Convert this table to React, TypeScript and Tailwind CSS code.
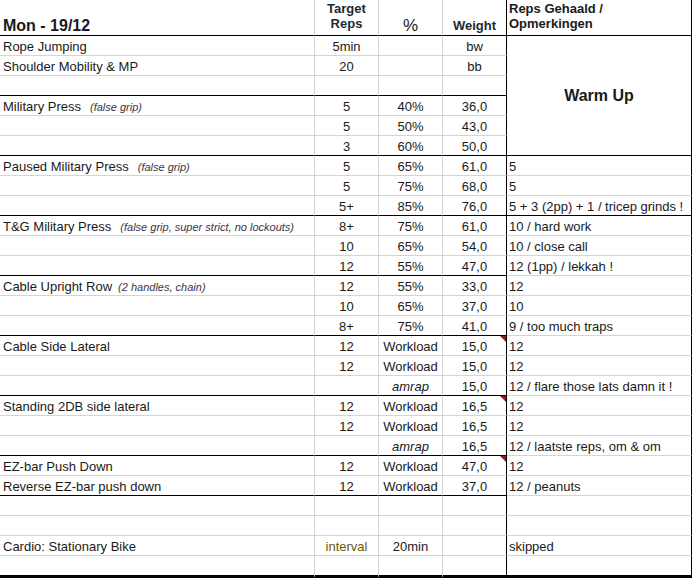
import React from 'react';

type Row = {
  a?: string;
  note?: string;
  tightNote?: boolean;
  b?: string;
  c?: string;
  d?: string;
  e?: string;
  amrap?: boolean;
  gold?: boolean;
  flag?: boolean;
  line?: 'gray' | 'black' | 'blackAll' | 'end';
};

const rows: Row[] = [
  { a: 'Rope Jumping', b: '5min', d: 'bw' },
  { a: 'Shoulder Mobility & MP', b: '20', d: 'bb' },
  { line: 'black' },
  { a: 'Military Press', note: '(false grip)', b: '5', c: '40%', d: '36,0' },
  { b: '5', c: '50%', d: '43,0' },
  { b: '3', c: '60%', d: '50,0', line: 'blackAll' },
  { a: 'Paused Military Press', note: '(false grip)', b: '5', c: '65%', d: '61,0', e: '5' },
  { b: '5', c: '75%', d: '68,0', e: '5' },
  { b: '5+', c: '85%', d: '76,0', e: '5 + 3 (2pp) + 1 / tricep grinds !', line: 'blackAll' },
  {
    a: 'T&G Military Press',
    note: '(false grip, super strict, no lockouts)',
    b: '8+',
    c: '75%',
    d: '61,0',
    e: '10 / hard work',
  },
  { b: '10', c: '65%', d: '54,0', e: '10 / close call' },
  { b: '12', c: '55%', d: '47,0', e: '12 (1pp) / lekkah !', line: 'black' },
  { a: 'Cable Upright Row', note: '(2 handles, chain)', tightNote: true, b: '12', c: '55%', d: '33,0', e: '12' },
  { b: '10', c: '65%', d: '37,0', e: '10' },
  { b: '8+', c: '75%', d: '41,0', e: '9 / too much traps', line: 'black' },
  { a: 'Cable Side Lateral', b: '12', c: 'Workload', d: '15,0', e: '12', flag: true },
  { b: '12', c: 'Workload', d: '15,0', e: '12' },
  { c: 'amrap', amrap: true, d: '15,0', e: '12 / flare those lats damn it !', line: 'black' },
  { a: 'Standing 2DB side lateral', b: '12', c: 'Workload', d: '16,5', e: '12', flag: true },
  { b: '12', c: 'Workload', d: '16,5', e: '12' },
  { c: 'amrap', amrap: true, d: '16,5', e: '12 / laatste reps, om & om', line: 'black' },
  { a: 'EZ-bar Push Down', b: '12', c: 'Workload', d: '47,0', e: '12', flag: true },
  { a: 'Reverse EZ-bar push down', b: '12', c: 'Workload', d: '37,0', e: '12 / peanuts', line: 'black' },
  {},
  {},
  { a: 'Cardio: Stationary Bike', b: 'interval', gold: true, c: '20min', e: 'skipped' },
  { line: 'end' },
];

// excel-ish cell: text sits on the bottom of the row
const cellText = 'flex items-end leading-4 text-[13px] whitespace-nowrap overflow-hidden';

function bottomFor(line: Row['line'], isE: boolean) {
  if (line === 'end') return 'border-b-[3px] border-b-black';
  if (line === 'blackAll') return 'border-b border-b-black';
  if (line === 'black' && !isE) return 'border-b border-b-black';
  return 'border-b border-b-[#d4d4d4]';
}

const App: React.FC = () => {
  return (
    <div className="w-[694px] h-[578px] bg-white text-[#1a1a1a] font-['Liberation_Sans',Arial,sans-serif]">
      <div className="grid w-[692px] grid-cols-[315px_64px_64px_64px_185px] grid-rows-[36px_repeat(26,20px)_22px]">
        {/* header */}
        <div className="flex items-end pl-[3px] pb-[1px] leading-4 text-[16px] font-bold border-b border-b-black border-r border-r-[#d4d4d4]">
          Mon - 19/12
        </div>
        <div className="flex flex-col items-center pt-[1px] leading-[15px] text-[13px] font-bold text-[#1c2a33] border-b border-b-black border-r border-r-[#d4d4d4]">
          <span>Target</span>
          <span>Reps</span>
        </div>
        <div className="flex items-end justify-center pb-[1px] leading-4 text-[17px] border-b border-b-black border-r border-r-[#d4d4d4]">
          %
        </div>
        <div className="flex items-end justify-center pb-[1px] leading-4 text-[13px] font-bold text-[#1c2a33] border-b border-b-black border-r border-r-black">
          Weight
        </div>
        <div className="flex flex-col pl-[2px] pt-[1px] leading-[15px] text-[13px] font-bold border-b border-b-black border-r border-r-black">
          <span>Reps Gehaald /</span>
          <span>Opmerkingen</span>
        </div>

        {rows.map((r, i) => (
          <React.Fragment key={i}>
            <div className={`${cellText} pl-[3px] border-r border-r-[#d4d4d4] ${bottomFor(r.line, false)}`}>
              {r.a}
              {r.note && (
                <span
                  className={`${r.tightNote ? 'ml-[6px]' : 'ml-[9px]'} text-[11px] italic text-[#3d3540]`}
                >
                  {r.note}
                </span>
              )}
            </div>
            <div
              className={`${cellText} justify-center border-r border-r-[#d4d4d4] ${bottomFor(r.line, false)} ${
                r.gold ? 'text-[#6e5a00]' : ''
              }`}
            >
              {r.b}
            </div>
            <div
              className={`${cellText} justify-center border-r border-r-[#d4d4d4] ${bottomFor(r.line, false)} ${
                r.amrap ? 'italic' : ''
              }`}
            >
              {r.c}
            </div>
            <div className={`${cellText} relative justify-center border-r border-r-black ${bottomFor(r.line, false)}`}>
              {r.d}
              {r.flag && (
                <span className="absolute top-0 right-0 h-0 w-0 border-l-[6px] border-l-transparent border-t-[6px] border-t-[#8a1c1c]" />
              )}
            </div>
            {i === 0 && (
              <div className="row-span-6 flex items-center justify-center text-[16px] font-bold border-r border-r-black border-b border-b-black">
                Warm Up
              </div>
            )}
            {i >= 6 && (
              <div className={`${cellText} pl-[2px] border-r border-r-black ${bottomFor(r.line, true)}`}>{r.e}</div>
            )}
          </React.Fragment>
        ))}
      </div>
    </div>
  );
};

export default App;
